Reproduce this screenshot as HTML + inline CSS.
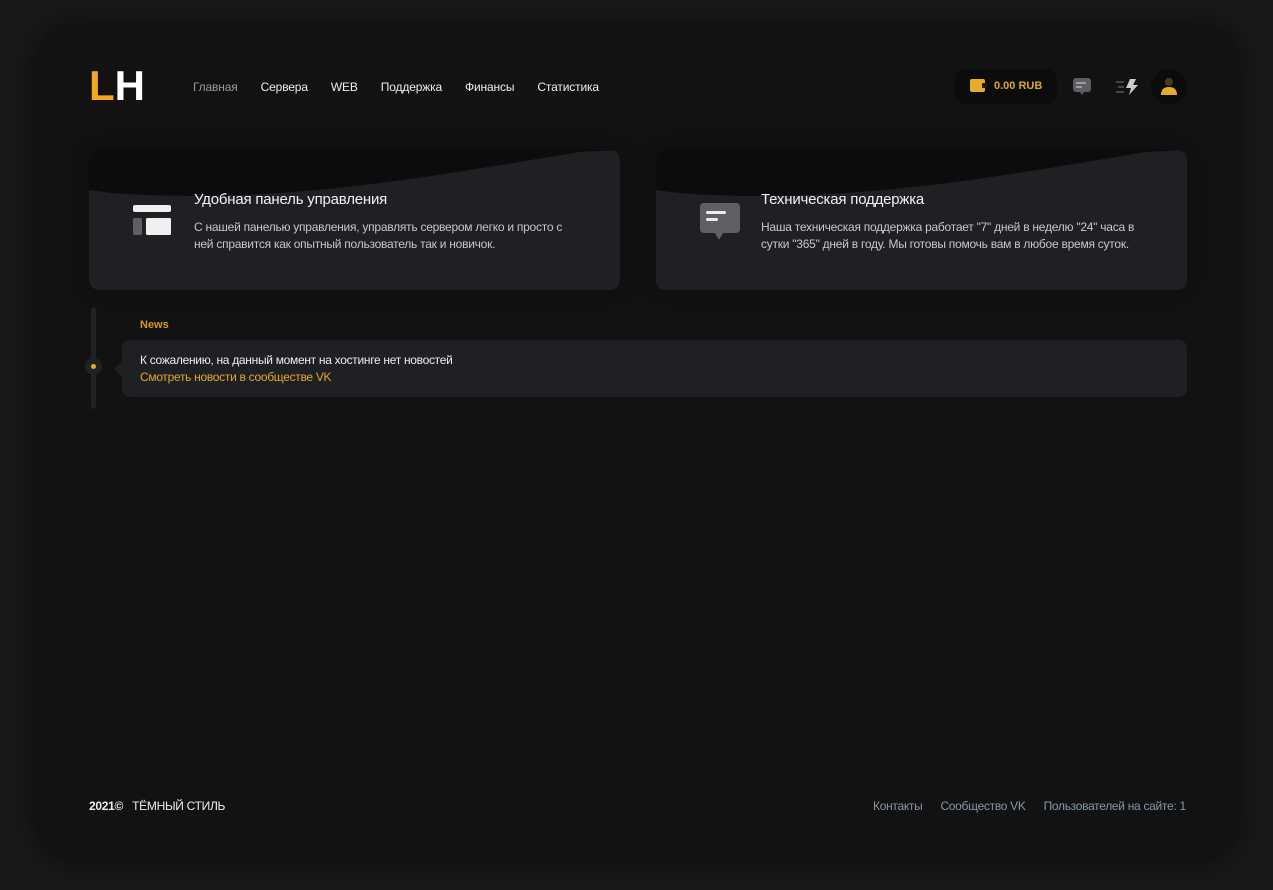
<!DOCTYPE html>
<html><head><meta charset="utf-8"><style>
*{margin:0;padding:0;box-sizing:border-box}
html,body{width:1273px;height:890px;overflow:hidden}
body{background:#19191a;font-family:"Liberation Sans","DejaVu Sans",sans-serif;position:relative}
.main{position:absolute;left:35px;top:24px;width:1205px;height:838px;background:#121212;border-radius:40px;box-shadow:0 0 30px rgba(0,0,0,.5)}
.abs{position:absolute}
.logo{left:89px;top:66px;font-size:42px;line-height:40px;font-weight:700;color:#fff}
.logo span{color:#f5a623}
.nav{left:193px;top:80px;font-size:12px;color:#eee;display:flex;letter-spacing:-0.15px}
.nav a{margin-right:23px;color:#eee;text-decoration:none}
.nav a:first-child{color:#9a9a9a}
.bal{left:955px;top:69px;width:102px;height:35px;background:#0c0c0c;border-radius:10px;color:#e0a52a;font-weight:700;font-size:11px;line-height:35px;padding-left:39px}
.card{top:150px;width:531px;height:140px;background:#1f2024;border-radius:10px;overflow:hidden;box-shadow:0 0 20px rgba(0,0,0,.35)}
.card svg.w{position:absolute;left:0;top:0}
.card h3{position:absolute;left:105px;top:41px;font-size:15px;font-weight:400;color:#f2f2f2;letter-spacing:-0.2px}
.card p{position:absolute;left:105px;top:69px;width:380px;font-size:12px;line-height:17px;color:#c8c8c8;letter-spacing:-0.25px}
.news-t{left:140px;top:319px;font-size:11px;font-weight:700;color:#d49a26}
.nbox{left:122px;top:340px;width:1065px;height:57px;background:#1f2024;border-radius:8px}
.nbox .a{position:absolute;left:18px;top:13px;font-size:12px;color:#eee;letter-spacing:-0.3px}
.nbox .b{position:absolute;left:18px;top:30px;font-size:12px;color:#e4a626;letter-spacing:-0.3px}
.f{top:799px;font-size:12px;letter-spacing:-0.3px}
</style></head><body>
<div class="main"></div>
<div class="abs logo"><span>L</span>H</div>
<div class="abs nav"><a>Главная</a><a>Сервера</a><a>WEB</a><a>Поддержка</a><a>Финансы</a><a>Статистика</a></div>
<div class="abs bal">0.00 RUB</div>
<svg class="abs" style="left:970px;top:79px" width="18" height="14"><rect x="0" y="0" width="15" height="13" rx="2" fill="#e6ad2a"/><rect x="12" y="4" width="5" height="5" rx="1" fill="#1a1a1a"/></svg>
<svg class="abs" style="left:1073px;top:78px" width="20" height="20"><rect x="0" y="0" width="18" height="14" rx="3" fill="#5c5e63"/><path d="M7 14 L9 17 L11 14Z" fill="#5c5e63"/><rect x="3" y="4" width="10" height="2" fill="#9a9ca0"/><rect x="3" y="8" width="6" height="2" fill="#9a9ca0"/></svg>
<svg class="abs" style="left:1116px;top:78px" width="24" height="18"><rect x="0" y="3" width="8" height="2" fill="#44464a"/><rect x="2" y="8" width="6" height="2" fill="#44464a"/><rect x="0" y="13" width="8" height="2" fill="#44464a"/><path d="M14 1 L20 1 L17 7 L22 7 L13 17 L15 10 L10 10Z" fill="#c9cbd0"/></svg>
<div class="abs" style="left:1151px;top:69px;width:36px;height:36px;border-radius:50%;background:#0b0b0b"></div>
<svg class="abs" style="left:1159px;top:77px" width="20" height="20"><circle cx="10" cy="5" r="4" fill="#4a3a1c"/><path d="M2 18 Q2 10 10 10 Q18 10 18 18Z" fill="#e6ad2a"/></svg>

<div class="abs card" style="left:89px">
<svg class="w" width="531" height="140"><path d="M0 0 H531 V0 L490 2 C380 20 250 45 110 46 C60 46 25 44 0 40Z" fill="#0c0c0c"/></svg>
<svg class="abs" style="left:44px;top:55px" width="40" height="32"><rect x="0" y="0" width="38" height="7" rx="2" fill="#f0f0f0"/><rect x="0" y="13" width="9" height="17" rx="1.5" fill="#5d5f63"/><rect x="13" y="13" width="25" height="17" rx="1.5" fill="#f0f0f0"/></svg>
<h3>Удобная панель управления</h3>
<p>С нашей панелью управления, управлять сервером легко и просто с<br>ней справится как опытный пользователь так и новичок.</p>
</div>
<div class="abs card" style="left:656px">
<svg class="w" width="531" height="140"><path d="M0 0 H531 V0 L490 2 C380 20 250 45 110 46 C60 46 25 44 0 40Z" fill="#0c0c0c"/></svg>
<svg class="abs" style="left:44px;top:53px" width="40" height="36"><rect x="0" y="0" width="40" height="30" rx="4" fill="#5f6064"/><path d="M15 30 L19 37 L23 30Z" fill="#5f6064"/><rect x="6" y="8" width="20" height="3" rx="1.5" fill="#f0f0f0"/><rect x="6" y="15" width="12" height="3" rx="1.5" fill="#f0f0f0"/></svg>
<h3>Техническая поддержка</h3>
<p>Наша техническая поддержка работает "7" дней в неделю "24" часа в<br>сутки "365" дней в году. Мы готовы помочь вам в любое время суток.</p>
</div>

<div class="abs" style="left:91px;top:307px;width:5px;height:102px;background:#202124;border-radius:3px"></div>
<div class="abs" style="left:85px;top:358px;width:17px;height:17px;border-radius:50%;background:#202124"></div>
<div class="abs" style="left:91px;top:364px;width:5px;height:5px;border-radius:50%;background:#e6ad2a"></div>
<div class="abs" style="left:114px;top:362px;width:0;height:0;border-top:7px solid transparent;border-bottom:7px solid transparent;border-right:8px solid #1f2024"></div>
<div class="abs news-t">News</div>
<div class="abs nbox"><div class="a">К сожалению, на данный момент на хостинге нет новостей</div><div class="b">Смотреть новости в сообществе VK</div></div>

<div class="abs f" style="left:89px;color:#eee"><b>2021©</b>&nbsp;&nbsp;&nbsp;ТЁМНЫЙ СТИЛЬ</div>
<div class="abs f" style="left:873px;color:#8797aa">Контакты<span style="margin-left:18px">Сообщество VK</span><span style="margin-left:18px">Пользователей на сайте: 1</span></div>
</body></html>
